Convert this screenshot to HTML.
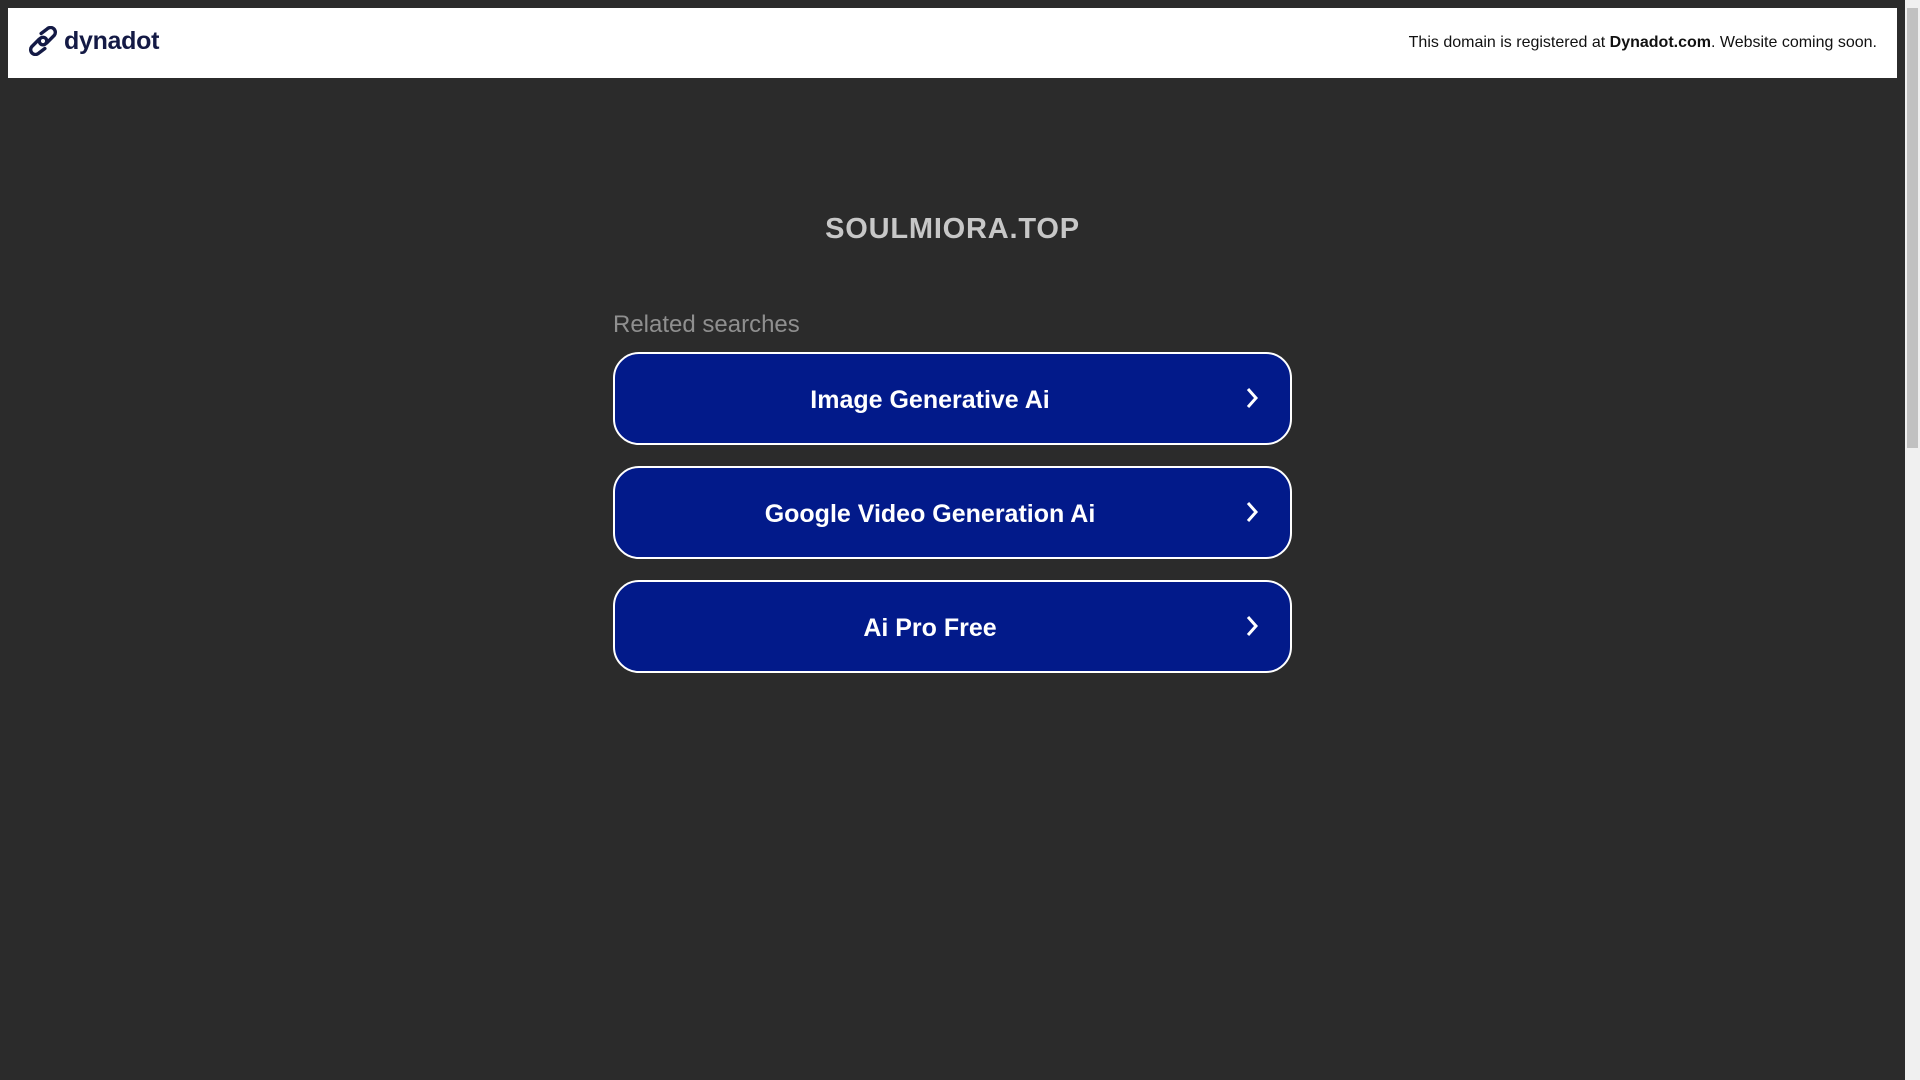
<!DOCTYPE html>
<html><head><meta charset="utf-8"><style>
html,body{margin:0;padding:0;width:1920px;height:1080px;overflow:hidden;background:#2b2b2b;font-family:"Liberation Sans",Arial,sans-serif}
.hdr{position:absolute;left:8px;top:8px;width:1889px;height:70px;background:#fff}
.logo{position:absolute;left:20px;top:18px;display:flex;align-items:center}
.logo span{font-size:25px;font-weight:bold;color:#141a45;margin-left:6px;letter-spacing:-0.3px}
.reg{position:absolute;right:20px;top:26px;font-size:16px;color:#111}
.sb{position:absolute;left:1905px;top:0;width:15px;height:1080px;background:#f0f0f0}
.thumb{position:absolute;left:2px;top:8px;width:11px;height:440px;background:#c1c1c1}
h1{position:absolute;left:0;width:1905px;top:213px;margin:0;text-align:center;font-size:29px;color:#c7c7c7;font-weight:bold;letter-spacing:0.8px}
.rel{position:absolute;left:613px;top:311px;font-size:24px;color:#8f8f8f}
.btn{position:absolute;left:613px;width:675px;height:89px;border:2px solid #fff;border-radius:26px;background:#021a8a;color:#fff;font-weight:bold;font-size:25px}
.btn span{position:absolute;left:0;width:630px;text-align:center;top:32px}
.btn svg{position:absolute;left:630px;top:33px}
</style></head><body>
<div class="hdr">
<div class="logo"><svg width="30" height="30" viewBox="0 0 32 32" fill="none" stroke="#141a45" stroke-width="3.6" stroke-linecap="round"><path d="M14 8 L20 3.5 A5 5 0 0 1 28 10 L20 18"/><path d="M18 24 L12 28.5 A5 5 0 0 1 4 22 L12 14"/><circle cx="16" cy="16" r="4"/></svg><span>dynadot</span></div>
<div class="reg">This domain is registered at <b>Dynadot.com</b>. Website coming soon.</div>
</div>
<h1>SOULMIORA.TOP</h1>
<div class="rel">Related searches</div>
<div class="btn" style="top:352px"><span>Image Generative Ai</span><svg width="14" height="22" viewBox="0 0 14 22"><path d="M3 2 L11 11 L3 20" stroke="#fff" stroke-width="3" fill="none"/></svg></div>
<div class="btn" style="top:466px"><span>Google Video Generation Ai</span><svg width="14" height="22" viewBox="0 0 14 22"><path d="M3 2 L11 11 L3 20" stroke="#fff" stroke-width="3" fill="none"/></svg></div>
<div class="btn" style="top:580px"><span>Ai Pro Free</span><svg width="14" height="22" viewBox="0 0 14 22"><path d="M3 2 L11 11 L3 20" stroke="#fff" stroke-width="3" fill="none"/></svg></div>
<div class="sb"><div class="thumb"></div></div>
</body></html>
